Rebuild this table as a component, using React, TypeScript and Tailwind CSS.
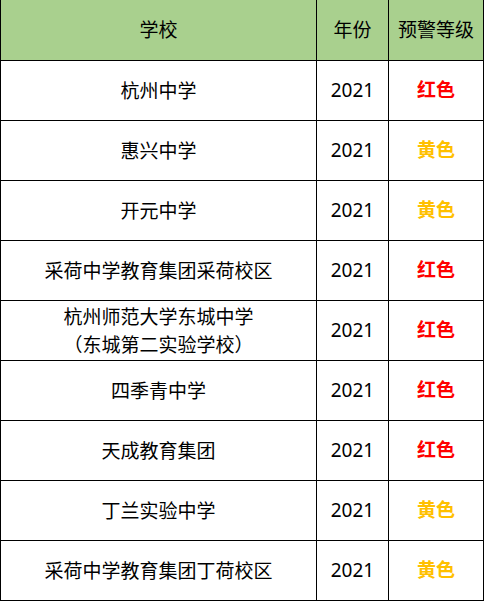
const rows = [
  { name: ["杭州中学"], level: "红色" },
  { name: ["惠兴中学"], level: "黄色" },
  { name: ["开元中学"], level: "黄色" },
  { name: ["采荷中学教育集团采荷校区"], level: "红色" },
  { name: ["杭州师范大学东城中学", "（东城第二实验学校）"], level: "红色" },
  { name: ["四季青中学"], level: "红色" },
  { name: ["天成教育集团"], level: "红色" },
  { name: ["丁兰实验中学"], level: "黄色" },
  { name: ["采荷中学教育集团丁荷校区"], level: "黄色" },
];

export default function App() {
  return (
    <div
      className="w-[484px] bg-white text-black text-[19px]"
      style={{ fontFamily: '"Noto Sans", "Noto Sans CJK SC", sans-serif' }}
    >
      <div className="border-l border-r border-b border-black">
        {/* Header */}
        <div className="flex h-[60px] bg-[#a9d08e]">
          <div className="w-[316px] border-r border-black flex items-center justify-center">
            学校
          </div>
          <div className="w-[72px] border-r border-black flex items-center justify-center">
            年份
          </div>
          <div className="flex-1 flex items-center justify-center">预警等级</div>
        </div>

        {rows.map((row, i) => (
          <div key={i} className="flex h-[60px] border-t border-black">
            <div className="w-[316px] border-r border-black flex flex-col items-center justify-center leading-[28px]">
              {row.name.map((line) => (
                <span key={line}>{line}</span>
              ))}
            </div>
            <div className="w-[72px] border-r border-black flex items-center justify-center">
              2021
            </div>
            <div
              className={
                "flex-1 flex items-center justify-center font-bold " +
                (row.level === "红色" ? "text-[#ff0000]" : "text-[#ffc000]")
              }
            >
              {row.level}
            </div>
          </div>
        ))}
      </div>
    </div>
  );
}
